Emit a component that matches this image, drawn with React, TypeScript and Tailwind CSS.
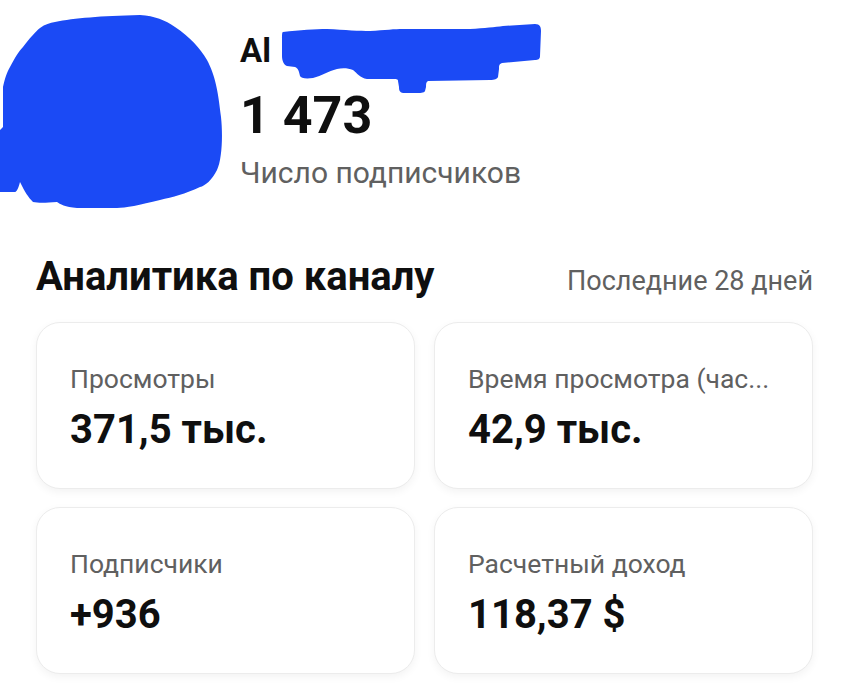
import React from "react"

const stats = [
  { label: "Просмотры", value: "371,5 тыс." },
  { label: "Время просмотра (час...", value: "42,9 тыс." },
  { label: "Подписчики", value: "+936" },
  { label: "Расчетный доход", value: "118,37 $" },
]

const Avatar = () => (
  <svg width="222" height="215" viewBox="0 0 222 215" className="shrink-0">
    <path
      d="M40 28 C45 24 50 23 55 22 C75 18 100 16 140 15 C155 16 165 20 175 27 C190 37 200 48 207 60 C215 75 218 90 221 117 C223 135 222 160 217 170 C212 180 205 186 200 187 C185 194 173 197 160 200 C140 205 125 208 117 208 L77 208 C65 207 60 204 57 202 C45 203 38 203 33 202 C28 197 25 192 20 182 C18 190 16 192 15 192 L0 192 L0 130 L3 127 L3 87 C5 78 7 72 10 67 C15 58 18 52 23 47 C30 38 35 32 40 28 Z"
      fill="#1b4af5"
    />
  </svg>
)

const Scribble = () => (
  <svg
    width="270"
    height="80"
    viewBox="275 20 270 80"
    className="absolute left-[35px] top-[-11px]"
  >
    <path
      d="M283 32 C300 30 315 29 327 29 C345 30 360 31 370 31 C385 30 395 29 403 29 L470 29 C485 28 495 27 503 26 L535 24 C540 24 541 27 541 31 L540 56 C540 59 538 60 535 60 L502 63 C499 64 499 66 499 69 L498 77 C497 79 495 80 490 80 L428 81 C426 82 426 84 426 87 L425 91 C424 93 420 93 416 93 L405 93 C400 93 399 91 399 87 L398 81 C398 79 396 79 392 79 L367 79 C360 78 357 73 353 70 C348 68 342 68 337 69 C328 71 322 76 313 78 C305 79 301 78 300 76 C299 71 298 68 295 67 L287 66 C284 65 282 61 282 56 L282 40 C282 35 282 32 283 32 Z"
      fill="#1b4af5"
    />
  </svg>
)

const StatCard = ({ label, value }: { label: string; value: string }) => (
  <div className="bg-white border border-[#ececec] rounded-[24px] shadow-[0_3px_8px_rgba(0,0,0,0.05)] pl-[33px] pr-[16px] pt-[41px] pb-[34px]">
    <div className="text-[26.5px] leading-[30px] text-[#606060] whitespace-nowrap">{label}</div>
    <div className="mt-[12px] text-[40px] leading-[48px] font-bold text-[#0f0f0f]">{value}</div>
  </div>
)

export default function App() {
  return (
    <div className="w-[849px] h-[700px] bg-white overflow-hidden font-['Roboto',sans-serif]">
      <div className="flex h-[215px]">
        <Avatar />
        <div className="pl-[18px] pt-[31px]">
          <div className="relative text-[33px] leading-[40px] font-bold text-[#0f0f0f]">
            Al
            <Scribble />
          </div>
          <div className="mt-[15px] text-[52px] leading-[60px] font-bold text-[#0f0f0f]">1 473</div>
          <div className="mt-[10px] text-[30px] leading-[34px] text-[#606060]">Число подписчиков</div>
        </div>
      </div>

      <div className="mt-[40px] px-[36px] flex items-baseline justify-between">
        <h2 className="text-[40px] leading-[44px] font-bold text-[#0f0f0f]">Аналитика по каналу</h2>
        <span className="text-[27px] leading-[32px] text-[#606060]">Последние 28 дней</span>
      </div>

      <div className="mt-[23px] px-[36px] grid grid-cols-2 gap-x-[19px] gap-y-[18px]">
        {stats.map((s) => (
          <StatCard key={s.label} label={s.label} value={s.value} />
        ))}
      </div>
    </div>
  )
}
